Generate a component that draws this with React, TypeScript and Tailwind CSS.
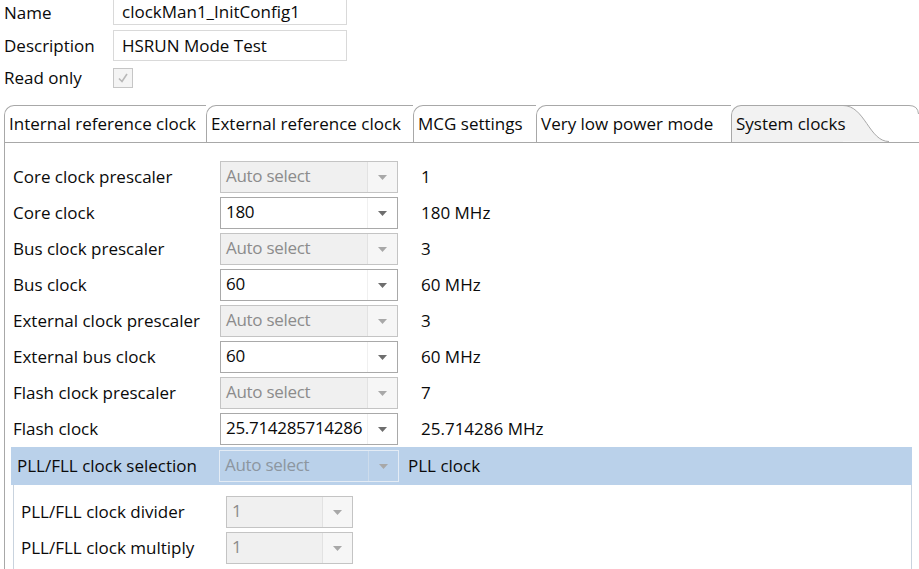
import React from "react"

const rows = [
  { label: "Core clock prescaler", value: "Auto select", disabled: true, result: "1" },
  { label: "Core clock", value: "180", disabled: false, result: "180 MHz" },
  { label: "Bus clock prescaler", value: "Auto select", disabled: true, result: "3" },
  { label: "Bus clock", value: "60", disabled: false, result: "60 MHz" },
  { label: "External clock prescaler", value: "Auto select", disabled: true, result: "3" },
  { label: "External bus clock", value: "60", disabled: false, result: "60 MHz" },
  { label: "Flash clock prescaler", value: "Auto select", disabled: true, result: "7" },
  { label: "Flash clock", value: "25.714285714286", disabled: false, result: "25.714286 MHz" },
]

const tabs = [
  { label: "Internal reference clock", width: "w-[202px]" },
  { label: "External reference clock", width: "w-[207px]" },
  { label: "MCG settings", width: "w-[123px]" },
  { label: "Very low power mode", width: "w-[195px]" },
]

function Arrow({ muted }: { muted?: boolean }) {
  return (
    <svg width="9" height="5" viewBox="0 0 9 5">
      <path d="M0 0 L9 0 L4.5 5 Z" fill={muted ? "#a8a8a8" : "#6e6e6e"} />
    </svg>
  )
}

type ComboVariant = "disabled" | "enabled" | "highlight"

function Combo({ value, variant, width }: { value: string; variant: ComboVariant; width: string }) {
  const box =
    variant === "disabled"
      ? "bg-[#f0f0f0] border-[#c4c4c4] text-[#8c8c8c]"
      : variant === "enabled"
        ? "bg-white border-[#a9a9a9] text-[#0a0a0a]"
        : "bg-transparent border-[#e4ecf5] text-[#8c96a0]"
  const arrowBox =
    variant === "disabled"
      ? "bg-[#f6f6f6] border-[#e2e2e2]"
      : variant === "enabled"
        ? "bg-white border-[#f0f0f0]"
        : "bg-transparent border-[#cddcec]"
  return (
    <div className={`flex h-[32px] ${width} border ${box}`}>
      <div className="flex-1 pl-[5px] leading-[28px] tracking-[-0.3px] whitespace-nowrap overflow-hidden">{value}</div>
      <div className={`w-[30px] flex items-center justify-center border-l ${arrowBox}`}>
        <Arrow muted={variant !== "enabled"} />
      </div>
    </div>
  )
}

export default function App() {
  return (
    <div
      className="w-[919px] h-[569px] overflow-hidden bg-white text-[17px] text-[#0a0a0a]"
      style={{ fontFamily: '"Open Sans", "Noto Sans", sans-serif' }}
    >
      {/* header fields */}
      <div className="flex flex-col">
        <div className="flex items-center h-[25px]">
          <span className="w-[113px] pl-[4px]">Name</span>
          <div className="w-[234px] h-[25px] border-x border-b border-[#d9d9d9] pl-[8px] leading-[24px]">clockMan1_InitConfig1</div>
        </div>
        <div className="flex items-center h-[31px] mt-[5px]">
          <span className="w-[113px] pl-[4px]">Description</span>
          <div className="w-[234px] h-[31px] border border-[#d9d9d9] pl-[8px] leading-[29px]">HSRUN Mode Test</div>
        </div>
        <div className="flex items-center h-[31px] mt-[1px]">
          <span className="w-[113px] pl-[4px]">Read only</span>
          <div className="w-[20px] h-[20px] border border-[#c6c6c6] bg-[#f4f4f4] flex items-center justify-center">
            <svg width="12" height="12" viewBox="0 0 12 12">
              <path d="M2 6.5 L5 9.5 L10 2" stroke="#b8b8b8" strokeWidth="1.6" fill="none" />
            </svg>
          </div>
        </div>
      </div>

      {/* tab folder */}
      <div className="mt-[12px] ml-[4px]">
        <div className="flex h-[38px] border-b border-[#a8a8a8]">
          {tabs.map((t) => (
            <div
              key={t.label}
              className={`${t.width} border-l border-t border-[#a8a8a8] rounded-tl-[10px] pl-[4px] leading-[36px] whitespace-nowrap`}
            >
              {t.label}
            </div>
          ))}
          <div className="w-[112px] border-l border-t border-[#a8a8a8] rounded-tl-[10px] bg-[#f2f2f2] pl-[4px] leading-[36px] whitespace-nowrap relative z-10">
            System clocks
          </div>
          <svg width="76" height="37" viewBox="0 0 76 37" className="shrink-0">
            <path d="M0 0.5 C22 0.5 26 36.5 46 36.5 L0 36.5 Z" fill="#f2f2f2" />
            <path d="M0 0.5 C22 0.5 26 36.5 46 36.5" stroke="#a8a8a8" fill="none" />
            <path d="M0 0.5 L66 0.5 Q75 0.5 75.5 9" stroke="#a8a8a8" fill="none" />
          </svg>
        </div>

        <div className="border-l border-[#a8a8a8] h-[430px] pt-[16px]">
          {rows.map((r) => (
            <div key={r.label} className="flex items-center h-[36px]">
              <span className="w-[215px] pl-[8px] whitespace-nowrap">{r.label}</span>
              <Combo value={r.value} variant={r.disabled ? "disabled" : "enabled"} width="w-[178px]" />
              <span className="pl-[23px]">{r.result}</span>
            </div>
          ))}

          <div className="ml-[6px] w-[901px]">
            <div className="flex items-center h-[38px] bg-[#bad1ea]">
              <span className="w-[208px] pl-[6px] whitespace-nowrap">PLL/FLL clock selection</span>
              <Combo value="Auto select" variant="highlight" width="w-[180px]" />
              <span className="pl-[9px]">PLL clock</span>
            </div>
            <div className="border-l border-r border-[#c9d3de] ml-[2px] h-[100px] pt-[9px]">
              <div className="flex items-center h-[36px]">
                <span className="w-[212px] pl-[7px] whitespace-nowrap">PLL/FLL clock divider</span>
                <Combo value="1" variant="disabled" width="w-[127px]" />
              </div>
              <div className="flex items-center h-[36px]">
                <span className="w-[212px] pl-[7px] whitespace-nowrap">PLL/FLL clock multiply</span>
                <Combo value="1" variant="disabled" width="w-[127px]" />
              </div>
            </div>
          </div>
        </div>
      </div>
    </div>
  )
}
